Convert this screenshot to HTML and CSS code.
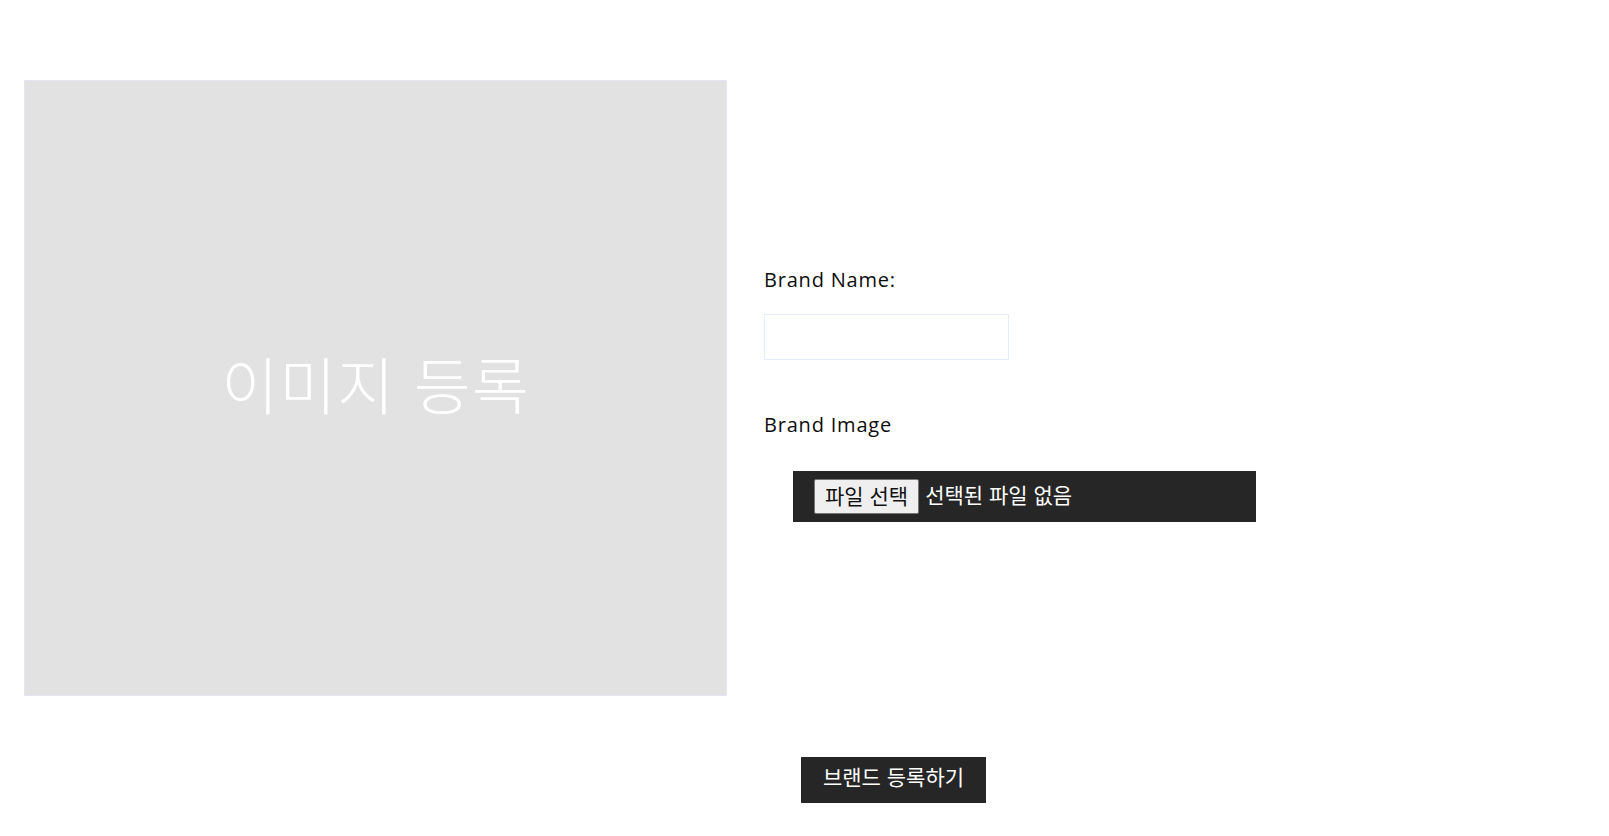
FILE: index.html
```html
<!DOCTYPE html>
<html lang="ko">
<head>
<meta charset="utf-8">
<title>Brand</title>
<link rel="stylesheet" href="styles.css">
</head>
<body>
<div class="page">
  <div class="row">
    <div class="preview">
      <span class="preview-text">이미지 등록</span>
    </div>
    <div class="form">
      <label class="label" for="brandName">Brand Name:</label>
      <input class="text-input" id="brandName" type="text">
      <label class="label label-image">Brand Image</label>
      <div class="file-bar">
        <span class="file-btn">파일 선택</span>
        <span class="file-status">선택된 파일 없음</span>
      </div>
    </div>
  </div>
  <div class="actions">
    <button class="submit" type="button">브랜드 등록하기</button>
  </div>
</div>
</body>
</html>
```

FILE: styles.css
```css
* { box-sizing: border-box; }
html, body { margin: 0; padding: 0; background: #fff; }
body { font-family: "Open Sans", "Noto Sans", "Noto Sans CJK KR", sans-serif; color: #111; }

.page { padding: 80px 24px 0 24px; }

.row { display: flex; align-items: stretch; }

.preview {
  width: 703px;
  height: 616px;
  background: #e2e2e2;
  border: 1px solid #e6e6f2;
  display: flex;
  align-items: center;
  justify-content: center;
  flex: none;
  padding-bottom: 10px;
}
.preview-text {
  font-family: "Noto Sans CJK KR", sans-serif;
  font-weight: 300;
  font-size: 62px;
  color: #fff;
  line-height: 1;
  letter-spacing: 1px;
}

.form {
  margin-left: 37px;
  display: flex;
  flex-direction: column;
  padding-top: 188px;
}
.label {
  font-size: 20px;
  line-height: 24px;
  letter-spacing: 0.8px;
  font-weight: 500;
  color: #0d0d0d;
}
.text-input {
  margin-top: 22px;
  width: 245px;
  height: 46px;
  border: 1px solid #e6ecfb;
  background: #fff;
  outline: none;
}
.label-image { margin-top: 53px; }

.file-bar {
  margin-top: 34px;
  margin-left: 29px;
  width: 463px;
  height: 51px;
  background: #262626;
  display: flex;
  align-items: center;
  padding-left: 21px;
  font-family: "Noto Sans CJK KR", sans-serif;
  font-size: 21px;
}
.file-btn {
  display: inline-flex;
  align-items: center;
  height: 35px;
  padding: 0 10px 3px 10px;
  background: #efefef;
  border: 1px solid #767676;
  border-radius: 2px;
  color: #111;
  line-height: 1;
}
.file-status {
  color: #fff;
  margin-left: 6px;
  padding-bottom: 5px;
}

.actions {
  margin-top: 61px;
  padding-left: 777px;
}
.submit {
  width: 185px;
  height: 46px;
  background: #262626;
  color: #fff;
  border: none;
  font-family: "Noto Sans CJK KR", sans-serif;
  font-size: 21px;
  padding: 0 0 8px 0;
}
```
